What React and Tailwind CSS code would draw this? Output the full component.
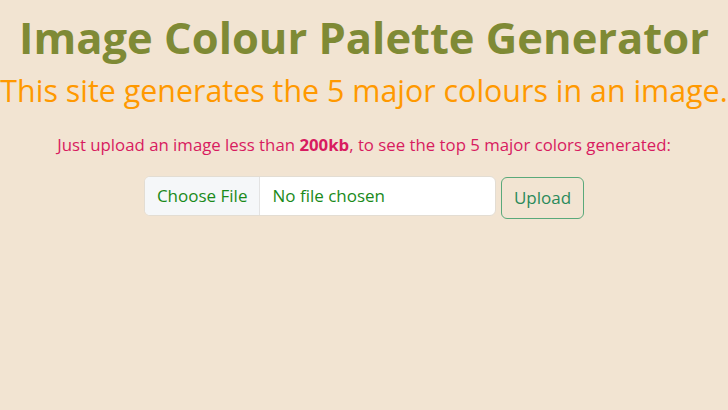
export default function App() {
  return (
    <div className="min-h-[410px] w-full overflow-hidden bg-[#f2e4d2] text-center" style={{ fontFamily: '"Open Sans", sans-serif' }}>
      <h1 className="pt-[12px] whitespace-nowrap text-[43.5px] font-bold leading-[1.2] text-[#7f8a35]">Image Colour Palette Generator</h1>
      <h2 className="mt-[9px] whitespace-nowrap text-[30.4px] leading-[1.2] text-[#ff9900]">This site generates the 5 major colours in an image.</h2>
      <p className="mt-[22px] text-[16.8px] leading-[1.5] text-[#d81b60]">
        Just upload an image less than <b>200kb</b>, to see the top 5 major colors generated:
      </p>
      <div className="mt-[19px] flex items-start justify-center gap-[5px]">
        <div className="flex h-[40px] w-[352px] overflow-hidden rounded-[6px] border border-[#e3ddd3] bg-white text-[17px] text-[#1a8a1a]">
          <div className="flex items-center border-r border-[#e3e3e3] bg-[#f5f7f9] px-[12px]">Choose File</div>
          <div className="flex items-center px-[12px]">No file chosen</div>
        </div>
        <button className="mt-[1px] h-[42px] rounded-[6px] border border-[#5aa97a] px-[12px] text-[17px] text-[#2a8a5a]">Upload</button>
      </div>
    </div>
  );
}
